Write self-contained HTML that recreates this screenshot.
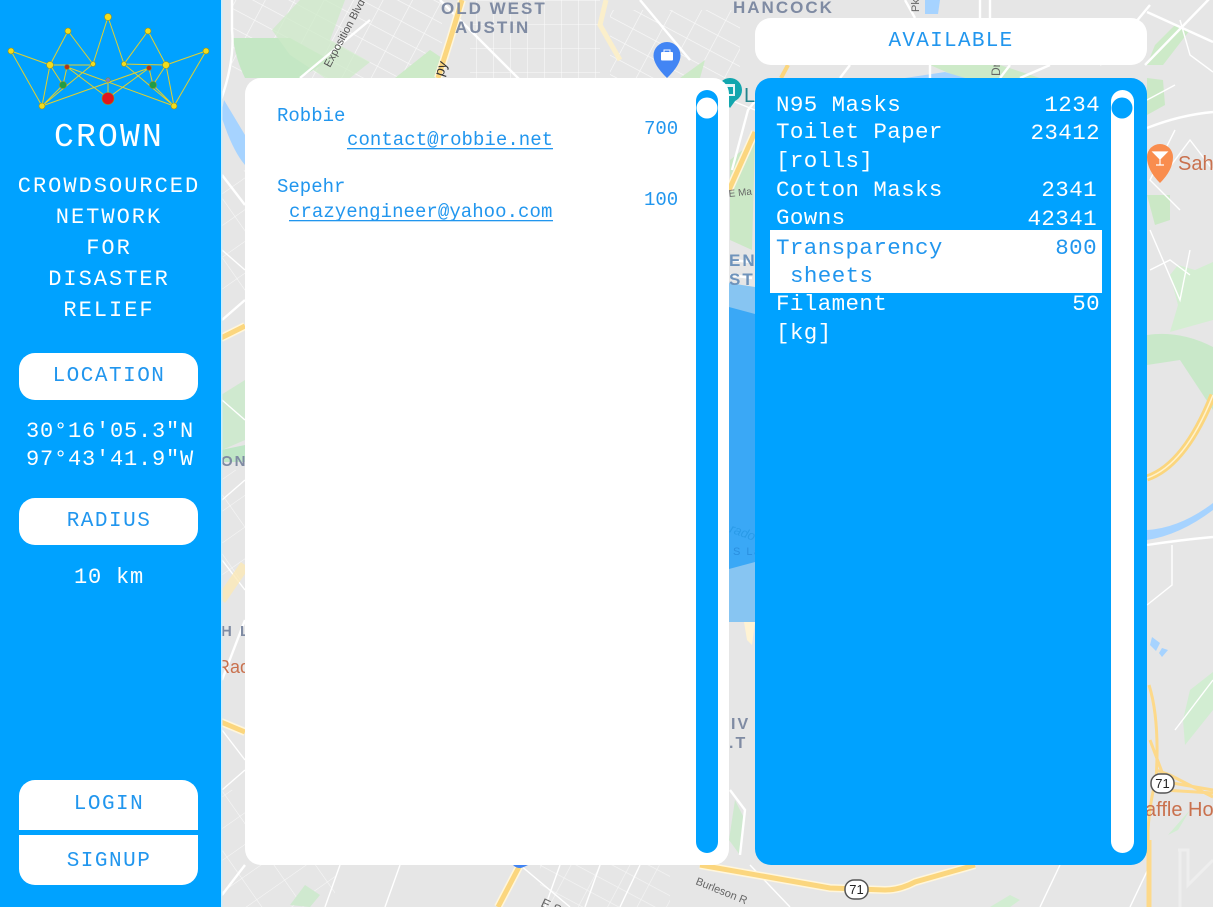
<!DOCTYPE html>
<html><head><meta charset="utf-8"><style>
html,body{margin:0;padding:0;width:1213px;height:907px;overflow:hidden;background:#e6e6e6}
svg{position:absolute;left:0;top:0;display:block}
.m{font-family:"Liberation Mono","DejaVu Sans Mono",monospace}
.s{font-family:"Liberation Sans",sans-serif}
.r{fill:none;stroke:#fff;stroke-width:1.4}
.R{fill:none;stroke:#fff;stroke-width:2.4}
.y{fill:none;stroke:#fff6dc;stroke-width:8}
.yy{fill:none;stroke:#fbd67e;stroke-width:5}
.lab{font-family:"Liberation Sans",sans-serif;font-weight:bold;fill:#7f8ba3;letter-spacing:2px;font-size:17px}
</style></head><body>
<svg width="1213" height="907" viewBox="0 0 1213 907" xmlns="http://www.w3.org/2000/svg">
<defs>
<pattern id="g1" width="26" height="17" patternUnits="userSpaceOnUse" patternTransform="rotate(28)"><path d="M0 0H26M0 0V17" fill="none" stroke="#fff" stroke-width="1.2"/></pattern>
<pattern id="g2" width="17" height="24" patternUnits="userSpaceOnUse"><path d="M0 0H17M0 0V24" fill="none" stroke="#fff" stroke-width="1.1"/></pattern>
<pattern id="g3" width="34" height="26" patternUnits="userSpaceOnUse" patternTransform="rotate(-35)"><path d="M0 0H34M0 0V26" fill="none" stroke="#fff" stroke-width="1.1"/></pattern>
</defs>
<rect width="1213" height="907" fill="#e6e6e6"/>
<!-- top map texture -->
<rect x="232" y="0" width="210" height="78" fill="url(#g1)" opacity=".8"/>
<rect x="470" y="0" width="130" height="78" fill="url(#g2)" opacity=".8"/>
<rect x="610" y="10" width="130" height="68" fill="url(#g1)" opacity=".8"/>
<rect x="221" y="170" width="24" height="130" fill="url(#g3)" opacity=".7"/>
<rect x="221" y="470" width="24" height="110" fill="url(#g3)" opacity=".7"/>
<rect x="221" y="790" width="24" height="117" fill="url(#g3)" opacity=".7"/>
<rect x="245" y="865" width="90" height="42" fill="url(#g3)" opacity=".7"/>
<rect x="540" y="865" width="130" height="42" fill="url(#g1)" opacity=".6"/>
<!-- parks -->
<path d="M233 38H290L330 60 300 78H245Q236 60 233 38Z" fill="#c4e7c4"/>
<path d="M300 0H345L330 40 370 62 350 78H325L290 55 272 30Z" fill="#cdeac8" opacity=".75"/>
<path d="M395 78L430 50 445 60 435 78Z" fill="#cdeac8"/>
<path d="M680 78L705 60 700 78Z" fill="#cdeac8"/>
<path d="M730 160V240L752 250 755 140Z" fill="#cbe8c6"/>
<path d="M930 65H1000L1040 78H960Z" fill="#cdeac8"/>
<path d="M1147 65H1163L1190 30 1175 25 1155 45Z" fill="#cdeac8"/>
<path d="M1147 78V115L1165 105 1163 80Z" fill="#cbe8c6"/>
<path d="M1170 275L1178 265 1195 270 1213 262V320L1170 332 1178 305Z" fill="#d4eed2"/>
<path d="M1147 335Q1180 330 1213 347V410L1180 360 1147 365Z" fill="#c9e8c9"/>
<path d="M1147 195H1170V220L1155 225Z" fill="#cbe8c6"/>
<path d="M221 450L245 445V462H221Z" fill="#bfe6c6"/><path d="M221 395L245 380V440L222 450Z" fill="#cfe9cf"/>
<path d="M1190 690L1213 672V710L1185 745 1183 720Z" fill="#d2edd2"/>
<path d="M1168 835L1190 810 1178 830Z" fill="#d2edd2"/>
<path d="M729 840L740 855 745 820 735 800Z" fill="#cfe9cf"/>
<path d="M990 907L1010 895 1020 900 1010 907Z" fill="#d2edd2"/>
<path d="M290 905L305 885 320 895 310 907Z" fill="#cfe9cf"/>
<!-- water -->
<path d="M221 115Q232 150 245 165V135L224 100Z" fill="#a6d3ff"/>
<path d="M1147 530Q1180 528 1213 503V510Q1180 535 1147 540Z" fill="#a6d3ff"/>
<path d="M1152 637L1160 643 1156 651 1150 645ZM1162 648L1168 650 1162 657 1159 653Z" fill="#a6d3ff"/>
<path d="M905 78L945 72 965 78Z" fill="#a6d3ff"/>
<path d="M925 0L940 0 938 14 925 14Z" fill="#a6d3ff"/>
<!-- major streets -->
<path class="R" d="M1145 65L1213 -5M1147 128Q1180 115 1213 112M1147 12L1213 42M1100 65L1150 5M1147 545Q1180 540 1213 537"/>
<path class="r" d="M1213 72L1190 55 1180 20M1175 130L1150 180 1180 210M1160 180L1190 140 1213 170M1150 230L1180 300 1190 250M1150 270L1170 260 1190 275M1147 100L1175 85M1172 545L1172 585 1147 605M1175 730L1213 680"/>
<path class="R" d="M221 100Q235 60 232 30 V0M300 78L370 20M440 0L520 80M640 0L690 60M222 175L245 205M245 300L222 320M245 620L222 680M245 865L222 895"/>
<path class="r" d="M222 250L245 270M222 400L245 420M222 500L245 480M222 560L245 590M730 100L755 110M222 730L245 760 M222 790L245 770"/>
<path class="R" d="M732 170L748 110 760 95M730 260L752 262M730 275L752 278M730 790L745 810 740 855"/>
<path class="R" d="M930 65V78M850 65L840 78M1010 65L1000 78M1050 65L1020 78M980 18L980 0M990 18V0M915 18L905 0"/>
<path class="r" d="M520 865L570 907M600 865L585 907M640 865L620 907M560 865L545 907M400 865L385 907M340 865L325 907M1060 865L1040 907M1150 865L1130 907M750 865L790 907"/>
<!-- highways -->
<path class="y" d="M462 0L450 40 438 78"/><path class="yy" d="M462 0L450 40 438 78"/>
<path class="y" d="M729 190L755 132"/><path class="yy" d="M729 190L755 132"/>
<path fill="none" stroke="#fbd67e" stroke-width="4" d="M781 78L788 65"/>
<path class="y" d="M221 338L245 326"/><path class="yy" d="M221 338L245 326"/>
<path class="y" d="M221 722L245 732"/><path class="yy" d="M221 722L245 732"/>
<path class="y" d="M498 907L520 865"/><path class="yy" d="M498 907L520 865"/>
<path class="y" d="M700 865L830 888 885 890Q900 890 915 882L975 865"/><path class="yy" d="M700 865L830 888 885 890Q900 890 915 882L975 865"/>
<path fill="none" stroke="#fbd67e" stroke-width="7" d="M1147 478Q1185 465 1213 395"/>
<path fill="none" stroke="#fff2cc" stroke-width="1.500" d="M1147 478Q1185 465 1213 395"/>
<path fill="none" stroke="#fdd98a" stroke-width="3" d="M1149 685Q1160 720 1156 780 1150 800 1148 830V907M1156 770L1170 775 1213 797M1155 780L1213 790M1163 790L1213 793M1150 740L1165 780"/>
<path fill="none" stroke="#fdd98a" stroke-width="5" d="M1149 840V907"/>
<path fill="none" stroke="#fdf0c8" stroke-width="5" d="M606 0L600 25 620 60" opacity=".9"/>
<path fill="none" stroke="#fbe9b6" stroke-width="10" d="M221 600L245 565" opacity=".8"/>
<path d="M744 622L755 622 752 645 747 640Z" fill="#fff3d4"/>
<!-- airport faint -->
<path d="M1180 850V907M1178 850H1188V885L1213 860" fill="none" stroke="#eeeeee" stroke-width="3"/>
<!-- blue radius overlay -->
<path d="M729 283L755 287V622L729 622Z" fill="#6fbdf5" opacity=".8"/>
<path d="M729 307L755 314V562L729 569Z" fill="#36a6f6" opacity=".95"/>
<!-- labels -->
<text class="lab" x="441" y="14">OLD WEST</text>
<text class="lab" x="455" y="33">AUSTIN</text>
<text class="lab" x="733" y="13">HANCOCK</text>
<text class="lab" x="221" y="466" style="font-size:15px">ON</text>
<text class="lab" x="221" y="636" style="font-size:15px">H L</text>
<text class="lab" x="729" y="266" style="font-size:17px;fill:#6f93bb">EN</text>
<text class="lab" x="729" y="285" style="font-size:17px;fill:#6f93bb">ST</text>
<text class="lab" x="731" y="729" style="font-size:16px">IV</text>
<text class="lab" x="729" y="748" style="font-size:16px">.T</text>
<text class="s" x="217" y="673" font-size="18" fill="#c9714e">Rad</text>
<text class="s" x="1178" y="170" font-size="20" fill="#c9714e">Sah</text>
<text class="s" x="1145" y="816" font-size="20" fill="#c9714e">affle Ho</text>
<text class="s" x="744" y="102" font-size="20" fill="#23838c">L</text>
<text class="s" font-size="11" fill="#555" transform="translate(330 68) rotate(-62)">Exposition Blvd</text>
<text class="s" font-size="14" fill="#333" transform="translate(443 77) rotate(-72)">py</text>
<text class="s" font-size="10" fill="#666" x="729" y="197" transform="rotate(-6 729 197)"> E Ma</text>
<text class="s" font-size="11" fill="#666" transform="translate(695 884) rotate(22)">Burleson R</text>
<text class="s" font-size="11" fill="#666" transform="translate(919 12) rotate(-90)">Pkwy</text>
<text class="s" font-size="12" fill="#666" x="1000" y="76" transform="rotate(-90 1000 76)">Dr</text>
<text class="s" font-size="13" fill="#666" x="540" y="906" transform="rotate(25 540 906)">E S</text>
<text class="s" font-size="13" fill="#2a9be8" font-style="italic" x="729" y="532" transform="rotate(20 729 532)">rado</text>
<text class="s" font-size="11" fill="#2a8fdf" x="733" y="555" letter-spacing="1.500">S La</text>
<!-- pins -->
<path d="M667 42a13.500 13.500 0 0 1 13.500 13.500Q680.500 65 667 78 653.500 65 653.500 55.500A13.500 13.500 0 0 1 667 42Z" fill="#4285f4"/>
<rect x="661" y="52" width="12" height="8.500" rx="1" fill="#fff"/><rect x="664" y="50" width="6" height="3" fill="none" stroke="#fff"/>
<circle cx="730" cy="90" r="12" fill="#12a6ae"/><path d="M722 97L730 108 738 97Z" fill="#12a6ae"/>
<path d="M725 84H735V96H725Z" fill="#fff" opacity=".9"/><path d="M727 87H733V94H727Z" fill="#12a6ae"/>
<path d="M1160 144a13 13 0 0 1 13 13Q1173 170 1160 183 1147 170 1147 157A13 13 0 0 1 1160 144Z" fill="#f98d4e"/>
<path d="M1153 152H1167L1160 159ZM1160 159V165M1156 165H1164" fill="#fff" stroke="#fff" stroke-width="1.200"/>
<path d="M513 865H528Q522 868 520 868 516 868 513 865Z" fill="#4285f4"/>
<!-- 71 shields -->
<rect x="1151" y="774" width="23" height="19" rx="9" fill="#fff" stroke="#555" stroke-width="1.500"/>
<text class="s" x="1162.500" y="788" font-size="13" text-anchor="middle" fill="#222">71</text>
<rect x="845" y="880" width="23" height="19" rx="9" fill="#fff" stroke="#555" stroke-width="1.500"/>
<text class="s" x="856.500" y="894" font-size="13" text-anchor="middle" fill="#222">71</text>

<!-- sidebar -->
<rect x="0" y="0" width="221" height="907" fill="#00a2ff"/>
<rect x="221" y="0" width="1.500" height="907" fill="#c8efff"/>
<g stroke="#e0d030" stroke-width="1" fill="none">
<path d="M108 17L93 64M108 17L124 64M68 31L50 65M68 31L93 64M148 31L124 64M148 31L166 65M11 51L50 65M11 51L42 106M206 51L166 65M206 51L174 106M50 65H93M124 64L166 65M50 65L42 106M166 65L174 106M42 106L93 64M174 106L124 64M67 67L63 85M50 65L63 85M67 67L108 98M149 68L108 98M67 67L174 106M149 68L42 106M63 85L42 106M153 85L174 106M166 65L153 85M149 68L153 85M108 80V98"/>
</g>
<g stroke="#9a8f18" stroke-width=".6">
<circle cx="108" cy="17" r="3.500" fill="#f2dc1c"/><circle cx="68" cy="31" r="3" fill="#f2dc1c"/><circle cx="148" cy="31" r="3" fill="#f2dc1c"/>
<circle cx="11" cy="51" r="3" fill="#f2dc1c"/><circle cx="206" cy="51" r="3" fill="#f2dc1c"/><circle cx="50" cy="65" r="3.500" fill="#f2dc1c"/><circle cx="166" cy="65" r="3.500" fill="#f2dc1c"/>
<circle cx="93" cy="64" r="2.500" fill="#f2dc1c"/><circle cx="124" cy="64" r="2.500" fill="#f2dc1c"/><circle cx="42" cy="106" r="3" fill="#f2dc1c"/><circle cx="174" cy="106" r="3" fill="#f2dc1c"/>
<circle cx="67" cy="67" r="2.500" fill="#b5331e"/><circle cx="149" cy="68" r="2.500" fill="#b5331e"/>
<circle cx="63" cy="85" r="3.500" fill="#1f9d46"/><circle cx="153" cy="85" r="3.500" fill="#1f9d46"/>
<circle cx="108" cy="80" r="2.200" fill="#7a7fd0"/><circle cx="108" cy="98.500" r="6" fill="#e0161e"/>
</g>
<g class="m" fill="#fff" text-anchor="middle">
<text x="109" y="146" font-size="33" letter-spacing="2.200">CROWN</text>
<g font-size="22" letter-spacing="2">
<text x="109" y="192">CROWDSOURCED</text>
<text x="109" y="223">NETWORK</text>
<text x="109" y="254">FOR</text>
<text x="109" y="285">DISASTER</text>
<text x="109" y="316">RELIEF</text>
</g>
<g font-size="22" letter-spacing="0.800">
<text x="110" y="437">30°16'05.3"N</text>
<text x="110" y="465">97°43'41.9"W</text>
<text x="109" y="583">10 km</text>
</g>
</g>
<rect x="19" y="353" width="179" height="47" rx="16" fill="#fff"/>
<rect x="19" y="498" width="179" height="47" rx="16" fill="#fff"/>
<path d="M19 830V796a16 16 0 0 1 16-16H182a16 16 0 0 1 16 16V830Z" fill="#fff"/>
<path d="M19 835V869a16 16 0 0 0 16 16H182a16 16 0 0 0 16-16V835Z" fill="#fff"/>
<g class="m" fill="#2196ee" font-size="21" letter-spacing="1.500" text-anchor="middle">
<text x="109" y="381">LOCATION</text>
<text x="109" y="526">RADIUS</text>
<text x="109" y="809">LOGIN</text>
<text x="109" y="866">SIGNUP</text>
</g>

<!-- left panel -->
<rect x="245" y="78" width="484" height="787" rx="16" fill="#fff"/>
<rect x="696" y="90" width="22" height="763" rx="11" fill="#00a2ff"/>
<circle cx="707" cy="108" r="10.500" fill="#fff"/>
<g class="m" fill="#2196ee" font-size="19">
<text x="277" y="121">Robbie</text>
<text x="347" y="145" letter-spacing=".05">contact@robbie.net</text>
<text x="644" y="134">700</text>
<text x="277" y="192">Sepehr</text>
<text x="289" y="217" letter-spacing=".05">crazyengineer@yahoo.com</text>
<text x="644" y="205">100</text>
</g>
<rect x="347" y="148" width="206" height="1.300" fill="#2196ee"/>
<rect x="289" y="220" width="264" height="1.300" fill="#2196ee"/>

<!-- right -->
<rect x="755" y="18" width="392" height="47" rx="16" fill="#fff"/>
<text class="m" x="951" y="46" fill="#2196ee" font-size="21" letter-spacing="1.300" text-anchor="middle">AVAILABLE</text>
<rect x="755" y="78" width="392" height="787" rx="16" fill="#00a2ff"/>
<rect x="770" y="230" width="332" height="63" fill="#fff"/>
<rect x="1111" y="90" width="23" height="763" rx="11.500" fill="#fff"/>
<circle cx="1122" cy="108" r="10.500" fill="#00a2ff"/>
<g class="m" font-size="22.500" letter-spacing="0.400" fill="#fff">
<text x="776" y="111">N95 Masks</text>
<text x="776" y="138">Toilet Paper</text>
<text x="776" y="167">[rolls]</text>
<text x="776" y="196">Cotton Masks</text>
<text x="776" y="224">Gowns</text>
<text x="776" y="310">Filament</text>
<text x="776" y="339">[kg]</text>
<g text-anchor="end">
<text x="1100" y="111">1234</text>
<text x="1100" y="139">23412</text>
<text x="1097" y="196">2341</text>
<text x="1097" y="225">42341</text>
<text x="1100" y="310">50</text>
</g>
<g fill="#2196ee">
<text x="776" y="254">Transparency</text>
<text x="790" y="282">sheets</text>
<text x="1097" y="254" text-anchor="end">800</text>
</g>
</g>
</svg>
</body></html>
